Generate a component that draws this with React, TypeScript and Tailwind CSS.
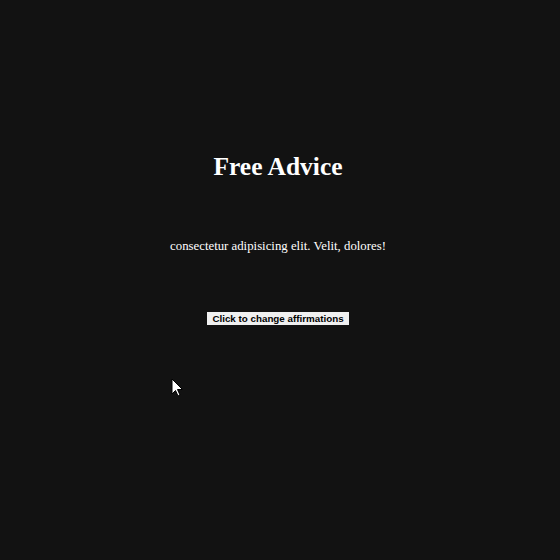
export default function App() {
  return (
    <div className="relative h-[560px] w-[560px] bg-[#121212] flex flex-col items-center pt-[150px] pr-[4px] font-['Liberation_Serif',serif] text-white">
      <h1 className="text-[25.5px] font-bold leading-[34px]">Free Advice</h1>
      <p className="mt-[54px] text-[12.8px] leading-[16px]">consectetur adipisicing elit. Velit, dolores!</p>
      <button className="mt-[58px] h-[13px] bg-[#f0f0f0] px-[5px] font-['Liberation_Sans',sans-serif] text-[9.8px] font-bold leading-[13px] text-black">
        Click to change affirmations
      </button>
      <svg className="absolute left-[171px] top-[378px]" width="13" height="19" viewBox="0 0 13 19">
        <path d="M1 1 L1 16 L4.5 12.5 L7 18 L9 17 L6.5 11.5 L11.5 11.5 Z" fill="#fff" stroke="#000" strokeWidth="1" />
      </svg>
    </div>
  );
}
